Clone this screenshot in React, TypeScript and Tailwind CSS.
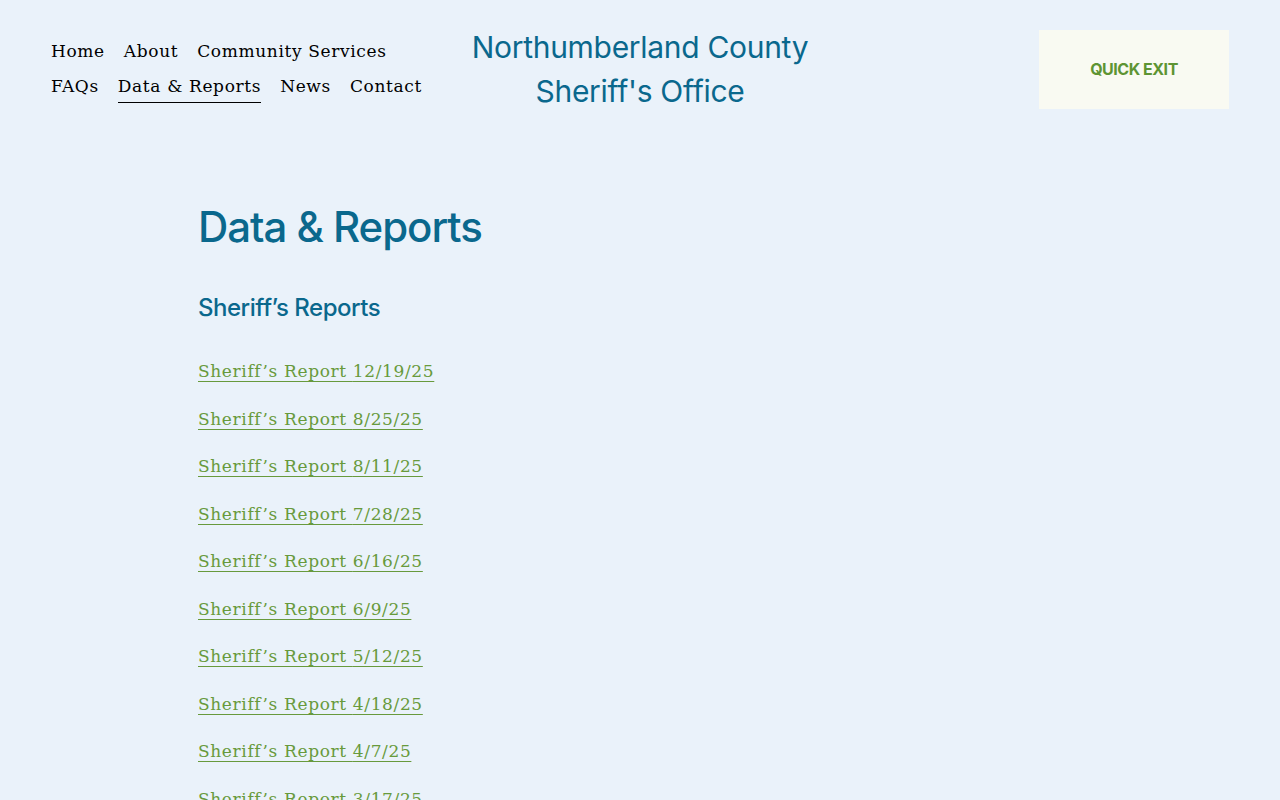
const navItems = [
  { label: 'Home' },
  { label: 'About' },
  { label: 'Community Services' },
  { label: 'FAQs' },
  { label: 'Data & Reports', active: true },
  { label: 'News' },
  { label: 'Contact' },
];

const reports = [
  '12/19/25',
  '8/25/25',
  '8/11/25',
  '7/28/25',
  '6/16/25',
  '6/9/25',
  '5/12/25',
  '4/18/25',
  '4/7/25',
  '3/17/25',
  '3/3/25',
];

export default function App() {
  return (
    <div className="min-h-screen bg-[#eaf2fa] font-['DejaVu_Serif',serif] tracking-[0.04em]">
      <header className="grid grid-cols-[1fr_auto_1fr] items-center px-[51px] pt-[25px]">
        <nav className="flex flex-wrap max-w-[385px] gap-x-[19px] text-[17px] leading-[35px] text-black">
          {navItems.map((item) => (
            <a
              key={item.label}
              href="#"
              className={
                item.active
                  ? 'relative after:absolute after:left-0 after:right-0 after:bottom-[1px] after:h-px after:bg-black'
                  : ''
              }
            >
              {item.label}
            </a>
          ))}
        </nav>
        <div className="text-center font-['Inter',sans-serif] text-[30px] leading-[44px] tracking-[-0.01em] text-[#0a688d]">
          <div>Northumberland County</div>
          <div>Sheriff's Office</div>
        </div>
        <div className="flex justify-end">
          <a
            href="#"
            className="flex h-[79px] w-[190px] items-center justify-center bg-[#f9faf2] font-['Inter',sans-serif] text-[16px] font-bold tracking-[-0.03em] text-[#5e9433]"
          >
            QUICK EXIT
          </a>
        </div>
      </header>

      <main className="pl-[198px] pt-[84px]">
        <h1 className="font-['Inter',sans-serif] text-[42px] font-medium leading-[60px] tracking-[-0.025em] text-[#0a688d]">
          Data &amp; Reports
        </h1>
        <h2 className="mt-[34px] font-['Inter',sans-serif] text-[24px] font-medium leading-[34px] tracking-[-0.02em] text-[#0a688d]">
          Sheriff’s Reports
        </h2>
        <ul className="mt-[33px] flex flex-col gap-[21px] text-[17px]">
          {reports.map((d) => (
            <li key={d} className="leading-[26.5px]">
              <a
                href="#"
                className="text-[#689a3c] underline decoration-1 underline-offset-[4px]"
              >
                Sheriff’s Report {d}
              </a>
            </li>
          ))}
        </ul>
      </main>
    </div>
  );
}
